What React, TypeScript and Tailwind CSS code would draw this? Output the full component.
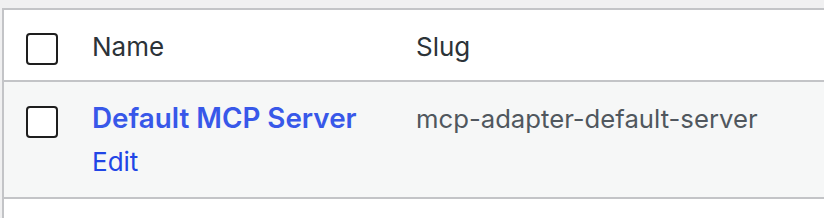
import React from "react";

function Checkbox() {
  return (
    <div className="w-[32px] h-[32px] rounded-[4px] border-2 border-[#1e1e1e] bg-white" />
  );
}

export default function App() {
  return (
    <div className="w-[824px] h-[218px] overflow-hidden bg-[#f0f0f1] pt-[8px] pl-[2px] font-['Inter','Liberation_Sans',sans-serif]">
      <div className="w-[900px] border-2 border-[#c3c4c7] bg-white">
        {/* header */}
        <div className="flex h-[72px] border-b-2 border-[#c3c4c7] bg-white">
          <div className="w-[68px] pl-[22px] pt-[23px]">
            <Checkbox />
          </div>
          <div className="w-[324px] pl-[20px] pt-[19px] text-[26px] leading-[36px] text-[#2c3338]">
            Name
          </div>
          <div className="flex-1 pl-[20px] pt-[19px] text-[26px] leading-[36px] text-[#2c3338]">
            Slug
          </div>
        </div>
        {/* row */}
        <div className="flex h-[117px] border-b-2 border-[#c3c4c7] bg-[#f6f7f7]">
          <div className="w-[68px] pl-[22px] pt-[24px]">
            <Checkbox />
          </div>
          <div className="w-[324px] pl-[20px] pt-[17px]">
            <div className="text-[27.8px] leading-[39px] font-semibold text-[#3858e9]">
              Default MCP Server
            </div>
            <div className="pt-[6px] text-[26px] leading-[36px] text-[#2145e6]">
              Edit
            </div>
          </div>
          <div className="flex-1 pl-[20px] pt-[19px] text-[25.7px] leading-[36px] text-[#50575e]">
            mcp-adapter-default-server
          </div>
        </div>
        <div className="h-[60px] bg-white" />
      </div>
    </div>
  );
}
